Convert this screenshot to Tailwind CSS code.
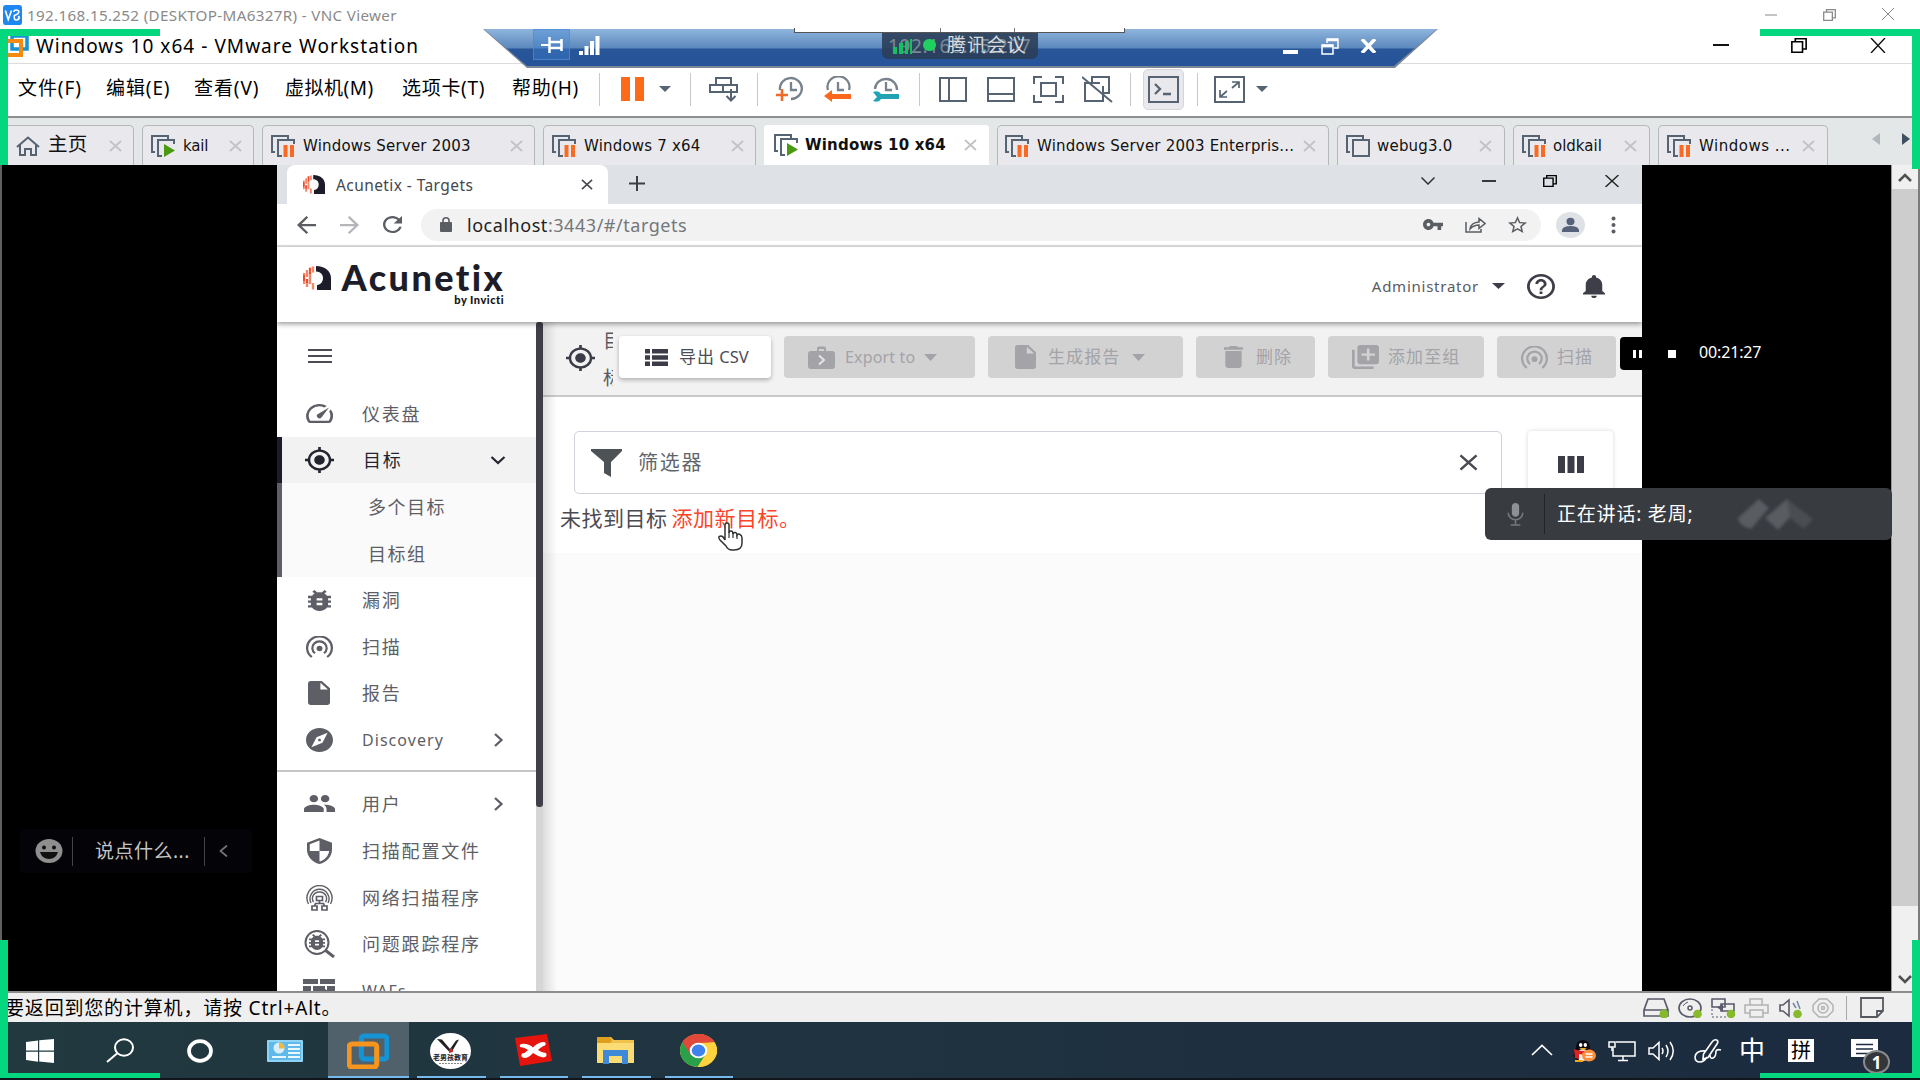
<!DOCTYPE html>
<html lang="zh-CN">
<head>
<meta charset="utf-8">
<title>VNC Viewer</title>
<script src="https://cdn.jsdelivr.net/npm/@tailwindcss/browser@4"></script>
</head>
<body class="bg-white">
<svg class="hidden" xmlns="http://www.w3.org/2000/svg">
  <symbol id="vm" viewBox="0 0 24 22" preserveAspectRatio="none"><path d="M4 17H1V1h16v3" fill="none" stroke="#566372" stroke-width="2"/><path d="M23 9V5H7v16h4" fill="none" stroke="#566372" stroke-width="2"/></symbol>
  <symbol id="vmpause" viewBox="0 0 24 22"><use href="#vm" width="24" height="22"/><path d="M12.500 10h4v12h-4zM19 10h4v12h-4z" fill="#fb6a22"/></symbol>
  <symbol id="vmplay" viewBox="0 0 24 22"><use href="#vm" width="24" height="22"/><path d="M13 9l11 6.500L13 22z" fill="#4a9a10"/></symbol>
  <symbol id="vmoff" viewBox="0 0 24 22"><path d="M4 17H1V1h16v3M7 5h16v16H7z" fill="none" stroke="#566372" stroke-width="2"/></symbol>
  <symbol id="x" viewBox="0 0 13 12" preserveAspectRatio="none"><path d="M1 1l11 10M12 1L1 11" fill="none" stroke="currentColor" stroke-width="1.700"/></symbol>
  <symbol id="target" viewBox="1 1 22 22" preserveAspectRatio="none"><path d="M12 8c-2.210 0-4 1.790-4 4s1.790 4 4 4 4-1.790 4-4-1.790-4-4-4zm8.940 3A8.994 8.994 0 0 0 13 3.060V1h-2v2.060A8.994 8.994 0 0 0 3.060 11H1v2h2.060A8.994 8.994 0 0 0 11 20.940V23h2v-2.060A8.994 8.994 0 0 0 20.940 13H23v-2h-2.060zM12 19c-3.870 0-7-3.130-7-7s3.130-7 7-7 7 3.130 7 7-3.130 7-7 7z" fill="currentColor"/></symbol>
  <symbol id="bug" viewBox="4 3 16 18" preserveAspectRatio="none"><path d="M20 8h-2.810c-.45-.78-1.070-1.450-1.820-1.960L17 4.410 15.590 3l-2.170 2.170C12.960 5.060 12.490 5 12 5c-.49 0-.96.06-1.410.17L8.410 3 7 4.410l1.620 1.630C7.880 6.550 7.260 7.220 6.810 8H4v2h2.090c-.05.33-.09.66-.09 1v1H4v2h2v1c0 .34.04.67.09 1H4v2h2.810c1.040 1.790 2.970 3 5.190 3s4.150-1.210 5.190-3H20v-2h-2.090c.05-.33.09-.66.09-1v-1h2v-2h-2v-1c0-.34-.04-.67-.09-1H20V8zm-6 8h-4v-2h4v2zm0-4h-4v-2h4v2z" fill="currentColor"/></symbol>
  <symbol id="file" viewBox="4 2 16 20" preserveAspectRatio="none"><path d="M6 2c-1.100 0-1.990.9-1.990 2L4 20c0 1.100.89 2 1.990 2H18c1.100 0 2-.9 2-2V8l-6-6H6zm7 7V3.500L18.500 9H13z" fill="currentColor"/></symbol>
  <symbol id="scan" viewBox="0 0 24 21" preserveAspectRatio="none"><g fill="none" stroke="currentColor" stroke-width="2"><path d="M5.200 20A11 11 0 1 1 18.800 20"/><path d="M8 16.500A6.400 6.400 0 1 1 16 16.500"/></g><circle cx="12" cy="12" r="2.600" fill="currentColor"/></symbol>
  <symbol id="caret" viewBox="0 0 12 6" preserveAspectRatio="none"><path d="M0 0h12L6 6z" fill="currentColor"/></symbol>
  <symbol id="chevR" viewBox="0 0 10 14"><path d="M1.500 1l6.500 6-6.500 6" fill="none" stroke="currentColor" stroke-width="2.300"/></symbol>
  <symbol id="acu" viewBox="0 0 28 24" preserveAspectRatio="none"><path d="M13 0C22 0 28 5 28 12v12H14v-5c4-.5 6-3.500 6-7s-2.500-6.500-7-6.500z" fill="#1d1d29"/><path d="M1 7v11M4 4v7M4 13v8M7 6v12M7 1.500v3M10 .5v6M10 17v6.500" stroke="#f4866c" stroke-width="2.400" fill="none"/><path d="M1 9v6M4 13v4M7 2v6" stroke="#e9472b" stroke-width="1.800"/></symbol>
  <symbol id="restore" viewBox="0 0 15 15" preserveAspectRatio="none"><path d="M.8 3.800h10v10.500h-10zM4 3.800V.8h10.200V11h-3.400" fill="none" stroke="currentColor" stroke-width="1.500"/></symbol>
  <symbol id="vmw" viewBox="0 0 41 36" preserveAspectRatio="none"><path d="M16 3h20a3 3 0 0 1 3 3v17a3 3 0 0 1-3 3H17a3 3 0 0 1-3-3V6a3 3 0 0 1 2-3z" fill="none" stroke="#1593d5" stroke-width="5"/><path d="M5 11h21a3 3 0 0 1 3 3v17a3 3 0 0 1-3 3H5a3 3 0 0 1-3-3V14a3 3 0 0 1 3-3z" fill="none" stroke="#f7941d" stroke-width="5"/></symbol>
</svg>

<div class="relative flex h-[1080px] w-[1920px] flex-col overflow-hidden bg-white font-['Noto_Sans','Noto_Sans_CJK_SC',sans-serif] text-black">

  <!-- VNC title bar -->
  <header class="flex h-[29px] shrink-0 items-center bg-white pl-[3px] text-[#8a8a8a]">
    <svg class="h-5 w-[19px]" viewBox="0 0 20 20" preserveAspectRatio="none"><rect width="20" height="20" rx="2.500" fill="#1f87f0"/><path d="M2.500 5.500l3 9 3.500-9M11.500 7q0-2 2.500-2t2.700 1.800Q16.700 9 12 10.500q-.8 4.500 2 4.500 3 0 3-3l-1-1" fill="none" stroke="#fff" stroke-width="1.700"/></svg>
    <span class="ml-[5px] w-[380px] whitespace-nowrap text-[15.200px] leading-5 tracking-[0.330px]">192.168.15.252 (DESKTOP-MA6327R) - VNC Viewer</span>
    <svg class="ml-auto h-[12px] w-[12px]" viewBox="0 0 12 12"><path d="M0 6h12" stroke="#8a8a8a"/></svg>
    <svg class="ml-[46px] h-[12px] w-[13px]"><use href="#restore"/></svg>
    <svg class="mr-[25px] ml-[45px] h-[13px] w-[14px]" viewBox="0 0 14 13"><path d="M1 0l12 12M13 0L1 12" stroke="#8a8a8a" fill="none"/></svg>
  </header>

  <!-- VMware title bar -->
  <header class="flex h-[35px] shrink-0 items-center border-b border-[#dcdcdc]">
    <svg class="h-[22px] w-[29px]" viewBox="0 0 29 22"><path d="M12 1h15v13H12z" fill="none" stroke="#1593d5" stroke-width="3.500"/><path d="M2 6h19v14H2z" fill="none" stroke="#f58a10" stroke-width="4"/></svg>
    <span class="ml-[7px] w-[400px] whitespace-nowrap text-[19px] leading-6 tracking-[1.050px]">Windows 10 x64 - VMware Workstation</span>
    <svg class="mb-[2px] ml-auto h-4 w-4" viewBox="0 0 16 16"><path d="M0 8h16" stroke="#111" stroke-width="2"/></svg>
    <svg class="mb-[2px] ml-[62px] h-[15px] w-4"><use href="#restore"/></svg>
    <svg class="mr-[34px] mb-[2px] ml-[63px] h-[15px] w-4" viewBox="0 0 16 15"><path d="M1 0l14 15M15 0L1 15" stroke="#111" stroke-width="1.400" fill="none"/></svg>
  </header>

  <!-- Menu and toolbar -->
  <nav class="flex h-[54px] shrink-0 items-center border-b-2 border-[#8d8f91] bg-white pb-[2px] pl-[18px] text-[19px] leading-6">
    <span class="mb-[2px] w-[88px] whitespace-nowrap tracking-[0.900px]">文件(F)</span>
    <span class="mb-[2px] w-[88px] whitespace-nowrap tracking-[0.900px]">编辑(E)</span>
    <span class="mb-[2px] w-[91px] whitespace-nowrap tracking-[0.900px]">查看(V)</span>
    <span class="mb-[2px] w-[117px] whitespace-nowrap tracking-[0.500px]">虚拟机(M)</span>
    <span class="mb-[2px] w-[110px] whitespace-nowrap tracking-[0.700px]">选项卡(T)</span>
    <span class="mb-[2px] w-[87px] whitespace-nowrap tracking-[0.700px]">帮助(H)</span>
    <i class="h-[33px] w-px bg-[#c9c9c9]"></i>
    <svg class="ml-[21px] h-6 w-[23px]" viewBox="0 0 23 24"><path d="M0 0h9v24H0zM14 0h9v24h-9z" fill="#fd6a1a"/></svg>
    <svg class="ml-[15px] h-[6px] w-3 text-[#566372]"><use href="#caret"/></svg>
    <i class="ml-[19px] h-[33px] w-px bg-[#c9c9c9]"></i>
    <svg class="ml-[18px] h-[26px] w-[30px]" viewBox="0 0 30 26" fill="none" stroke="#566372" stroke-width="2"><path d="M7 2h15v7H7zM1 9h13v7H1zM14 9h14v7H14zM22 13v11M17.500 20l4.500 4.500 4.500-4.500"/></svg>
    <i class="ml-[18px] h-[33px] w-px bg-[#c9c9c9]"></i>
    <svg class="ml-[18px] h-[26px] w-[28px]" viewBox="0 0 28 26" fill="none"><path d="M4 14A11 10.500 0 1 1 15 23" stroke="#77828d" stroke-width="2.300"/><path d="M15 6v8h6" stroke="#77828d" stroke-width="2.300"/><path d="M0 19h12M6 13v12" stroke="#f06a2a" stroke-width="2.600"/></svg>
    <svg class="ml-[20px] h-[26px] w-[28px]" viewBox="0 0 28 26" fill="none"><path d="M4 14A11 10.500 0 1 1 25 14" stroke="#77828d" stroke-width="2.300"/><path d="M14 6v8h6" stroke="#77828d" stroke-width="2.300"/><path d="M0 20l8-6v4h19v5H8v3z" fill="#fb671c"/></svg>
    <svg class="ml-[20px] h-[26px] w-[28px]" viewBox="0 0 28 26" fill="none"><path d="M3 13A11 10.500 0 1 1 25 14" stroke="#77828d" stroke-width="2.300"/><path d="M14 6v8h6" stroke="#77828d" stroke-width="2.300"/><path d="M1 16q6-2 8 2h18v5H9q-2 4-8 2l4-4z" fill="#1fa3b5"/></svg>
    <i class="ml-[19px] h-[33px] w-px bg-[#c9c9c9]"></i>
    <svg class="ml-[19px] h-[25px] w-[28px]" viewBox="0 0 28 25" fill="none" stroke="#566372" stroke-width="2"><path d="M1 1h26v23H1zM10 1v23"/></svg>
    <svg class="ml-[20px] h-[25px] w-[28px]" viewBox="0 0 28 25" fill="none" stroke="#566372" stroke-width="2"><path d="M1 1h26v23H1zM1 17h26"/></svg>
    <svg class="ml-[18px] h-[27px] w-[31px]" viewBox="0 0 31 27" fill="none" stroke="#566372" stroke-width="2"><path d="M1 8V1h8M22 1h8v7M30 19v7h-8M9 26H1v-7M8 7h15v13H8z"/></svg>
    <svg class="ml-[18px] h-[27px] w-[31px]" viewBox="0 0 31 27" fill="none" stroke="#566372" stroke-width="2"><path d="M10 7V1h17v16h-6M18 7H3v18h18V10M0 1l30 25"/></svg>
    <i class="ml-[17px] h-[33px] w-px bg-[#c9c9c9]"></i>
    <span class="ml-[12px] flex h-[41px] w-[41px] items-center justify-center rounded-[5px] border border-[#d6d6d9] bg-[#e9e9ed]"><svg class="h-[27px] w-[31px]" viewBox="0 0 31 27" fill="none" stroke="#566372" stroke-width="2"><path d="M1 1h29v25H1z"/><path d="M7 8l5 5-5 5M15 18h8" stroke-width="2.300"/></svg></span>
    <i class="ml-[13px] h-[33px] w-px bg-[#c9c9c9]"></i>
    <svg class="ml-[16px] h-[27px] w-[31px]" viewBox="0 0 31 27" fill="none" stroke="#566372" stroke-width="2"><path d="M1 1h29v25H1z"/><path d="M18 6h7v6M25 6l-7 6M6 14v7h7M6 21l7-6" stroke-width="1.700"/></svg>
    <svg class="ml-[11px] h-[6px] w-3 text-[#566372]"><use href="#caret"/></svg>
  </nav>

  <!-- Virtual machine tabs -->
  <div class="flex h-[47px] shrink-0 gap-2 bg-[#e3e7e8] pt-[7px] font-['DejaVu_Sans','Noto_Sans_CJK_SC',sans-serif] text-[15px] leading-5 tracking-[0.200px] text-[#111]">
    <div class="flex w-[134px] items-center rounded-t-[5px] border border-b-0 border-[#b5b7b9] bg-[#e9e9ed] pr-[11px] pl-[15px]"><svg class="h-[20px] w-6" viewBox="0 0 24 20" fill="none" stroke="#566372" stroke-width="2"><path d="M1 11L12 1.500 23 11M4 9v10h5v-6h6v6h5V9"/></svg><span class="mb-[2px] ml-[8px] flex-1 text-[19.500px] whitespace-nowrap">主页</span><svg class="h-3 w-[13px] text-[#c2c2c5]"><use href="#x"/></svg></div>
    <div class="flex w-[112px] items-center rounded-t-[5px] border border-b-0 border-[#b5b7b9] bg-[#e9e9ed] pr-[11px] pl-[8px]"><svg class="h-[22px] w-6"><use href="#vmplay"/></svg><span class="ml-2 flex-1 whitespace-nowrap tracking-[-0.200px]">kail</span><svg class="h-3 w-[13px] text-[#c2c2c5]"><use href="#x"/></svg></div>
    <div class="flex w-[273px] items-center rounded-t-[5px] border border-b-0 border-[#b5b7b9] bg-[#e9e9ed] pr-[11px] pl-[8px]"><svg class="h-[22px] w-6"><use href="#vmpause"/></svg><span class="ml-2 flex-1 whitespace-nowrap">Windows Server 2003</span><svg class="h-3 w-[13px] text-[#c2c2c5]"><use href="#x"/></svg></div>
    <div class="flex w-[213px] items-center rounded-t-[5px] border border-b-0 border-[#b5b7b9] bg-[#e9e9ed] pr-[11px] pl-[8px]"><svg class="h-[22px] w-6"><use href="#vmpause"/></svg><span class="ml-2 flex-1 whitespace-nowrap">Windows 7 x64</span><svg class="h-3 w-[13px] text-[#c2c2c5]"><use href="#x"/></svg></div>
    <div class="flex w-[225px] items-center rounded-t-[3px] bg-white pr-[12px] pl-[10px]"><svg class="h-[22px] w-6"><use href="#vmplay"/></svg><span class="ml-[7px] flex-1 font-bold whitespace-nowrap">Windows 10 x64</span><svg class="h-3 w-[13px] text-[#c2c2c5]"><use href="#x"/></svg></div>
    <div class="flex w-[332px] items-center rounded-t-[5px] border border-b-0 border-[#b5b7b9] bg-[#e9e9ed] pr-[12px] pl-[7px]"><svg class="h-[22px] w-6"><use href="#vmpause"/></svg><span class="ml-2 flex-1 whitespace-nowrap">Windows Server 2003 Enterpris...</span><svg class="h-3 w-[13px] text-[#c2c2c5]"><use href="#x"/></svg></div>
    <div class="flex w-[168px] items-center rounded-t-[5px] border border-b-0 border-[#b5b7b9] bg-[#e9e9ed] pr-[12px] pl-[8px]"><svg class="h-[22px] w-6"><use href="#vmoff"/></svg><span class="ml-[7px] flex-1 whitespace-nowrap">webug3.0</span><svg class="h-3 w-[13px] text-[#c2c2c5]"><use href="#x"/></svg></div>
    <div class="flex w-[137px] items-center rounded-t-[5px] border border-b-0 border-[#b5b7b9] bg-[#e9e9ed] pr-[12px] pl-[8px]"><svg class="h-[22px] w-6"><use href="#vmpause"/></svg><span class="ml-[7px] flex-1 whitespace-nowrap tracking-normal">oldkail</span><svg class="h-3 w-[13px] text-[#c2c2c5]"><use href="#x"/></svg></div>
    <div class="flex w-[170px] items-center rounded-t-[5px] border border-b-0 border-[#b5b7b9] bg-[#e9e9ed] pr-[12px] pl-[8px]"><svg class="h-[22px] w-6"><use href="#vmpause"/></svg><span class="ml-2 flex-1 whitespace-nowrap tracking-[0.500px]">Windows ...</span><svg class="h-3 w-[13px] text-[#c2c2c5]"><use href="#x"/></svg></div>
    <svg class="mt-[8px] ml-[36px] h-[12px] w-[8px]" viewBox="0 0 8 12"><path d="M8 0v12L0 6z" fill="#b0b6bd"/></svg>
    <svg class="mt-[8px] ml-[14px] h-[12px] w-[8px]" viewBox="0 0 8 12"><path d="M0 0v12l8-6z" fill="#3f5060"/></svg>
  </div>

  <!-- Guest screen -->
  <main class="flex h-[826px] shrink-0 border-l-2 border-[#5f6163] bg-black">
    <section class="ml-[275px] flex h-full w-[1365px] flex-col overflow-hidden bg-white">
      <!-- Chrome tab strip -->
      <div class="flex h-[39px] shrink-0 items-center bg-[#dee1e6] pl-[10px]">
        <div class="flex h-full w-[321px] items-center rounded-t-[8px] bg-white pl-[16px]">
          <svg class="h-[19px] w-[22px]"><use href="#acu"/></svg>
          <span class="ml-[11px] w-[245px] text-[15.500px] leading-5 tracking-[0.420px] whitespace-nowrap text-[#45484d]">Acunetix - Targets</span>
          <svg class="h-[11px] w-[12px] text-[#45484d]"><use href="#x"/></svg>
        </div>
        <svg class="mb-[2px] ml-[21px] h-[15px] w-4" viewBox="0 0 16 15"><path d="M0 7.500h16M8 0v15" stroke="#3c4043" stroke-width="2"/></svg>
        <svg class="mb-[7px] ml-auto h-[8px] w-[14px]" viewBox="0 0 14 8"><path d="M.5.500L7 7 13.500.500" fill="none" stroke="#333" stroke-width="1.500"/></svg>
        <svg class="mb-[7px] ml-[47px] h-[10px] w-[14px]" viewBox="0 0 14 10"><path d="M0 5h14" stroke="#000" stroke-width="1.500"/></svg>
        <svg class="mb-[7px] ml-[47px] h-[12px] w-[14px]"><use href="#restore"/></svg>
        <svg class="mr-[23px] mb-[7px] ml-[48px] h-[12px] w-[14px]" viewBox="0 0 14 12"><path d="M.5 0l13 12M13.500 0l-13 12" fill="none" stroke="#222" stroke-width="1.400"/></svg>
      </div>
      <!-- Address bar -->
      <div class="flex h-[43px] shrink-0 items-center border-b-2 border-[#e0e0e1] bg-white pl-[20px] text-[#5a5d62]">
        <svg class="h-[18px] w-[19px]" viewBox="4 4 16 16" preserveAspectRatio="none"><path d="M20 11H7.830l5.590-5.590L12 4l-8 8 8 8 1.410-1.410L7.830 13H20v-2z" fill="currentColor"/></svg>
        <svg class="ml-6 h-[18px] w-[19px] -scale-x-100 text-[#b4b6b9]" viewBox="4 4 16 16" preserveAspectRatio="none"><path d="M20 11H7.830l5.590-5.590L12 4l-8 8 8 8 1.410-1.410L7.830 13H20v-2z" fill="currentColor"/></svg>
        <svg class="ml-6 h-[17px] w-[19px]" viewBox="4 4 16 16" preserveAspectRatio="none"><path d="M17.650 6.350C16.200 4.900 14.210 4 12 4c-4.420 0-7.990 3.580-7.990 8s3.570 8 7.990 8c3.730 0 6.840-2.550 7.730-6h-2.080c-.82 2.330-3.040 4-5.650 4-3.310 0-6-2.690-6-6s2.690-6 6-6c1.660 0 3.140.69 4.220 1.780L13 11h7V4l-2.350 2.350z" fill="currentColor"/></svg>
        <div class="ml-[19px] flex h-8 w-[1120px] items-center rounded-full bg-[#f2f2f2] pl-[19px]">
          <svg class="h-[15px] w-3" viewBox="0 0 12 15"><path d="M1 5h10a1 1 0 0 1 1 1v8a1 1 0 0 1-1 1H1a1 1 0 0 1-1-1V6a1 1 0 0 1 1-1z" fill="currentColor"/><path d="M3 6V3.500a3 2.700 0 0 1 6 0V6" fill="none" stroke="currentColor" stroke-width="1.600"/></svg>
          <span class="ml-[15px] text-[18px] leading-6 tracking-[0.540px] whitespace-nowrap text-[#74777b]"><span class="text-[#222]">localhost</span>:3443/#/targets</span>
          <svg class="ml-auto h-[11px] w-[20px]" viewBox="1 6 22 12" preserveAspectRatio="none"><path d="M12.650 10C11.830 7.670 9.610 6 7 6c-3.310 0-6 2.690-6 6s2.690 6 6 6c2.610 0 4.830-1.670 5.650-4H17v4h4v-4h2v-4H12.650zM7 14c-1.100 0-2-.9-2-2s.9-2 2-2 2 .9 2 2-.9 2-2 2z" fill="currentColor"/></svg>
          <svg class="ml-[22px] h-[16px] w-[21px]" viewBox="0 0 21 16" fill="none" stroke="currentColor" stroke-width="1.500"><path d="M1 5v10h15v-3"/><path d="M5 12q1-6.500 9-7V1.500l6 5-6 5V8q-5 0-9 4z"/></svg>
          <svg class="mr-[14px] ml-[22px] h-[17px] w-[19px]" viewBox="2 2 20 19" preserveAspectRatio="none"><path d="M22 9.240l-7.190-.62L12 2 9.190 8.630 2 9.240l5.460 4.730L5.820 21 12 17.270 18.180 21l-1.630-7.030L22 9.240zM12 15.400l-3.760 2.270 1-4.280-3.320-2.880 4.380-.38L12 6.100l1.710 4.040 4.380.38-3.320 2.880 1 4.280L12 15.400z" fill="currentColor"/></svg>
        </div>
        <svg class="ml-[15px] h-[26px] w-[29px]" viewBox="0 0 29 26"><ellipse cx="14.500" cy="13" rx="14.500" ry="13" fill="#dee1e6"/><ellipse cx="14.500" cy="9.500" rx="4" ry="3.700" fill="#56617a"/><path d="M6 20v-2q1-4 8.500-4t8.500 4v2z" fill="#56617a"/></svg>
        <svg class="ml-[26px] h-[18px] w-[5px]" viewBox="0 0 5 18" fill="currentColor"><circle cx="2.500" cy="2.500" r="2"/><circle cx="2.500" cy="9" r="2"/><circle cx="2.500" cy="15.500" r="2"/></svg>
      </div>
      <!-- Acunetix header -->
      <div class="z-10 flex h-[75px] shrink-0 items-start bg-white pt-[14px] pl-[26px] shadow-[0_2px_5px_rgba(0,0,0,0.400)]">
        <svg class="mt-[5px] h-[24px] w-[28px]"><use href="#acu"/></svg>
        <div class="ml-[10px] flex w-[164px] flex-col items-end font-['Lato',sans-serif]">
          <span class="text-[36px] leading-[32px] font-black tracking-[2.400px] whitespace-nowrap text-[#1d1d29]">Acunetix</span>
          <span class="mt-[1px] mr-[1px] text-[11px] leading-[12px] font-black tracking-[0.500px] whitespace-nowrap text-[#111]">by Invicti</span>
        </div>
        <div class="mt-[12px] mr-[37px] ml-auto flex h-[26px] items-center text-[#3e3e48]">
          <span class="text-[15px] leading-5 tracking-[0.750px] whitespace-nowrap text-[#5a5a62]">Administrator</span>
          <svg class="ml-[13px] h-[6px] w-[13px]"><use href="#caret"/></svg>
          <svg class="ml-[22px] h-[25px] w-[28px]" viewBox="2 2 20 20" preserveAspectRatio="none"><path d="M11 18h2v-2h-2v2zm1-16C6.480 2 2 6.480 2 12s4.480 10 10 10 10-4.480 10-10S17.520 2 12 2zm0 18c-4.410 0-8-3.590-8-8s3.590-8 8-8 8 3.590 8 8-3.590 8-8 8zm0-14c-2.210 0-4 1.790-4 4h2c0-1.100.9-2 2-2s2 .9 2 2c0 2-3 1.750-3 5h2c0-2.250 3-2.500 3-5 0-2.210-1.790-4-4-4z" fill="currentColor"/></svg>
          <svg class="ml-[28px] h-[23px] w-[22px]" viewBox="4 2.500 16 19.500" preserveAspectRatio="none"><path d="M12 22c1.100 0 2-.9 2-2h-4c0 1.100.89 2 2 2zm6-6v-5c0-3.070-1.640-5.640-4.500-6.320V4c0-.83-.67-1.500-1.500-1.500s-1.500.67-1.500 1.500v.68C7.630 5.360 6 7.920 6 11v5l-2 2v1h16v-1l-2-2z" fill="currentColor"/></svg>
        </div>
      </div>
      <div class="flex h-[669px] shrink-0">
        <!-- Sidebar -->
        <aside class="flex h-full w-[259px] shrink-0 flex-col overflow-hidden bg-white text-[18px] leading-6 tracking-[1.800px] text-[#5e5e66]">
          <div class="flex h-[68px] shrink-0 pt-[27px] pl-[31px]"><svg class="h-[14px] w-6" viewBox="0 0 24 14"><path d="M0 1h24M0 7h24M0 13h24" stroke="#4c4c54" stroke-width="2"/></svg></div>
          <div class="flex h-[47px] shrink-0 items-center pl-[29px]"><svg class="h-[19px] w-[27px]" viewBox="2 4 20 16" preserveAspectRatio="none"><path d="M20.380 8.570l-1.230 1.850a8 8 0 0 1-.22 7.580H5.070A8 8 0 0 1 15.580 6.850l1.850-1.230A10 10 0 0 0 3.350 19a2 2 0 0 0 1.720 1h13.850a2 2 0 0 0 1.740-1 10 10 0 0 0-.27-10.440zm-9.790 6.840a2 2 0 0 0 2.830 0l5.660-8.490-8.490 5.660a2 2 0 0 0 0 2.830z" fill="currentColor"/></svg><span class="ml-[29px]">仪表盘</span></div>
          <div class="flex h-[46px] shrink-0 items-center border-l-[5px] border-[#1d1b29] bg-[#f2f2f2] pl-[23px] text-[#24242e]"><svg class="h-[26px] w-[29px]"><use href="#target"/></svg><span class="ml-[29px] w-[127px]">目标</span><svg class="h-[9px] w-[16px]" viewBox="0 0 16 9"><path d="M1.500 1L8 7l6.500-6" fill="none" stroke="currentColor" stroke-width="2.200"/></svg></div>
          <div class="flex h-[94px] shrink-0 flex-col border-l-[5px] border-[#5f5d68] bg-[#fafafa] pl-[86px] tracking-[1.500px]"><span class="flex h-[47px] items-center">多个目标</span><span class="flex h-[47px] items-center">目标组</span></div>
          <div class="flex h-[46px] shrink-0 items-center pl-[31px]"><svg class="h-[21px] w-[23px]"><use href="#bug"/></svg><span class="ml-[31px]">漏洞</span></div>
          <div class="flex h-[47px] shrink-0 items-center pl-[29px]"><svg class="h-[22px] w-[27px]"><use href="#scan"/></svg><span class="ml-[29px]">扫描</span></div>
          <div class="flex h-[46px] shrink-0 items-center pl-[31px]"><svg class="h-[24px] w-[22px]"><use href="#file"/></svg><span class="ml-[32px]">报告</span></div>
          <div class="flex h-[47px] shrink-0 items-center pl-[29px]"><svg class="h-[24px] w-[27px]" viewBox="2 2 20 20" preserveAspectRatio="none"><path d="M12 10.900c-.61 0-1.100.49-1.100 1.100s.49 1.100 1.100 1.100c.61 0 1.100-.49 1.100-1.100s-.49-1.100-1.100-1.100zM12 2C6.480 2 2 6.480 2 12s4.480 10 10 10 10-4.480 10-10S17.520 2 12 2zm2.190 12.190L6 18l3.810-8.190L18 6l-3.810 8.190z" fill="currentColor"/></svg><span class="ml-[29px] w-[131px] text-[16px] tracking-[1.050px]">Discovery</span><svg class="h-[14px] w-[11px]"><use href="#chevR"/></svg></div>
          <div class="mb-[8px] h-[9px] shrink-0 border-b-2 border-[#c6c6c9]"></div>
          <div class="flex h-[47px] shrink-0 items-center pl-[27px]"><svg class="h-[17px] w-[31px]" viewBox="1 5 22 14" preserveAspectRatio="none"><path d="M16 11c1.660 0 2.990-1.340 2.990-3S17.660 5 16 5c-1.660 0-3 1.340-3 3s1.340 3 3 3zm-8 0c1.660 0 2.990-1.340 2.990-3S9.660 5 8 5C6.340 5 5 6.340 5 8s1.340 3 3 3zm0 2c-2.330 0-7 1.170-7 3.500V19h14v-2.500c0-2.330-4.670-3.500-7-3.500zm8 0c-.29 0-.62.02-.97.05 1.160.84 1.970 1.970 1.970 3.450V19h6v-2.500c0-2.330-4.670-3.500-7-3.500z" fill="currentColor"/></svg><span class="ml-[27px] w-[131px]">用户</span><svg class="h-[14px] w-[11px]"><use href="#chevR"/></svg></div>
          <div class="flex h-[47px] shrink-0 items-center pl-[30px]"><svg class="h-[26px] w-[25px]" viewBox="3 1 18 22" preserveAspectRatio="none"><path d="M12 1L3 5v6c0 5.550 3.840 10.740 9 12 5.160-1.260 9-6.450 9-12V5l-9-4zm0 10.990h7c-.53 4.120-3.280 7.790-7 8.940V12H5V6.300l7-3.110v8.800z" fill="currentColor"/></svg><span class="ml-[30px]">扫描配置文件</span></div>
          <div class="flex h-[47px] shrink-0 items-center pl-[28px]"><svg class="h-[26px] w-[29px]" viewBox="0 0 29 26" fill="none" stroke="currentColor" stroke-width="1.400"><path d="M3.500 19A12.500 12.500 0 1 1 25.500 19M6 18A9.500 9.500 0 1 1 23 18M8.500 17A6.500 6.500 0 0 1 14.500 7a6.500 6.500 0 0 1 6 10"/><path d="M11.500 11.500h6v4h-6zM7 21h5v4H7zM17 21h5v4h-5zM14.500 15.500v3M9.500 21l1-2.500h8l1 2.500" stroke-width="1.700"/></svg><span class="ml-[28px]">网络扫描程序</span></div>
          <div class="flex h-[46px] shrink-0 items-center pl-[26px]"><svg class="h-[28px] w-[33px]" viewBox="0 0 33 28"><circle cx="14" cy="12.500" r="11.500" fill="none" stroke="currentColor" stroke-width="2"/><path d="M22 20l9 7" stroke="currentColor" stroke-width="3"/><use href="#bug" x="6" y="4" width="16" height="16"/></svg><span class="ml-[26px]">问题跟踪程序</span></div>
          <div class="flex h-[47px] shrink-0 items-center pl-[26px]"><svg class="h-[28px] w-[32px]" viewBox="0 0 32 28" fill="currentColor"><path d="M0 2h15v5H0zM17 2h15v5H17zM0 9h8v5H0zM10 9h12v5H10zM24 9h8v5h-8zM0 16h15v5H0zM17 15l5-3 6 4-2 6h-8z"/></svg><span class="ml-[27px] text-[16px] tracking-[1.050px]">WAFs</span></div>
        </aside>
        <div class="h-full w-[7px] shrink-0 bg-[#d6d6d6]"><div class="h-[485px] rounded-[3px] bg-[#413f4a]"></div></div>
        <!-- Targets page -->
        <div class="relative flex h-full w-[1099px] flex-col bg-[#fbfbfb]">
          <div class="flex h-[75px] shrink-0 items-center border-b-2 border-[#c9c9c9] bg-[#f2f2f2] pb-[3px] pl-[23px] text-[17px] leading-6 tracking-[1.100px] whitespace-nowrap shadow-[0_1px_4px_rgba(0,0,0,0.180)]">
            <svg class="mt-[2px] h-[26px] w-[29px] text-[#3c3c48]"><use href="#target"/></svg>
            <div class="ml-[8px] h-[68px] w-[10px] overflow-hidden text-[19px] leading-[37px] tracking-normal text-[#5a5a62]"><div class="h-[37px]">目</div><div class="h-[37px]">标</div></div>
            <button class="ml-[6px] flex h-[42px] w-[152px] items-center rounded-[4px] bg-white pl-[26px] text-[#4c4c56] shadow-[0_2px_4px_rgba(0,0,0,0.280)]"><svg class="h-[17px] w-[23px]" viewBox="0 0 23 17"><path d="M0 0h5v4.500H0zM7 0h16v4.500H7zM0 6.200h5v4.500H0zM7 6.200h16v4.500H7zM0 12.500h5V17H0zM7 12.500h16V17H7z" fill="#3c3c48"/></svg><span class="ml-[11px]">导出<span class="ml-1 text-[16.500px] tracking-normal">CSV</span></span></button>
            <button class="ml-[13px] flex h-[42px] w-[191px] items-center rounded-[4px] bg-[#d2d2d2] pl-[24px] text-[#a3a3a8]"><svg class="h-[23px] w-[27px]" viewBox="0 0 27 23"><path d="M3 5h6V2.500A2 2 0 0 1 11 .5h5a2 2 0 0 1 2 2V5h6a3 3 0 0 1 3 3v12a3 3 0 0 1-3 3H3a3 3 0 0 1-3-3V8a3 3 0 0 1 3-3zm8 0h5V3h-5z" fill="currentColor" fill-rule="evenodd"/><path d="M11 9.500l5 4.500-5 4.500" fill="none" stroke="#e4e4e4" stroke-width="2"/></svg><span class="ml-[10px] w-[79px] text-left text-[16px] tracking-[0.150px]">Export to</span><svg class="h-[7px] w-[13px]"><use href="#caret"/></svg></button>
            <button class="ml-[13px] flex h-[42px] w-[195px] items-center rounded-[4px] bg-[#d2d2d2] pl-[27px] text-[#a3a3a8]"><svg class="h-[24px] w-[21px]"><use href="#file"/></svg><span class="ml-[12px] w-[84px] text-left">生成报告</span><svg class="h-[7px] w-[13px]"><use href="#caret"/></svg></button>
            <button class="ml-[13px] flex h-[42px] w-[119px] items-center rounded-[4px] bg-[#d2d2d2] pl-[28px] text-[#a3a3a8]"><svg class="h-[22px] w-[19px]" viewBox="5 3 14 18" preserveAspectRatio="none"><path d="M6 19c0 1.100.9 2 2 2h8c1.100 0 2-.9 2-2V7H6v12zM19 4h-3.500l-1-1h-5l-1 1H5v2h14V4z" fill="currentColor"/></svg><span class="ml-[13px]">删除</span></button>
            <button class="ml-[13px] flex h-[42px] w-[156px] items-center rounded-[4px] bg-[#d2d2d2] pl-[24px] text-[#a3a3a8]"><svg class="h-[24px] w-[27px]" viewBox="2 2 20 20" preserveAspectRatio="none"><path d="M4 6H2v14c0 1.100.9 2 2 2h14v-2H4V6zm16-4H8c-1.100 0-2 .9-2 2v12c0 1.100.9 2 2 2h12c1.100 0 2-.9 2-2V4c0-1.100-.9-2-2-2zm-1 9h-4v4h-2v-4H9V9h4V5h2v4h4v2z" fill="currentColor"/></svg><span class="ml-[9px]">添加至组</span></button>
            <button class="ml-[13px] flex h-[42px] w-[119px] items-center rounded-[4px] bg-[#d2d2d2] pl-[24px] text-[#a3a3a8]"><svg class="h-[23px] w-[27px]"><use href="#scan"/></svg><span class="ml-[9px]">扫描</span></button>
          </div>
          <div class="flex h-[156px] shrink-0 flex-col bg-white pt-[34px] pl-[31px]">
            <div class="flex">
              <div class="flex h-[63px] w-[928px] items-center rounded-[5px] border-[1.500px] border-[#d2d2dd] pl-[16px] text-[20px] leading-6 tracking-[1.700px] text-[#5f666b]"><svg class="h-[28px] w-[31px]" viewBox="0 0 31 28"><path d="M0 0h31v2L20 13v15l-7-4V13L0 2z" fill="#4c5256"/></svg><span class="ml-[16px]">筛选器</span><svg class="mr-[23px] ml-auto h-[17px] w-[19px] text-[#484850]"><use href="#x"/></svg></div>
              <div class="ml-[26px] flex h-[64px] w-[85px] items-center justify-center rounded-[4px] bg-white pt-[3px] shadow-[0_0_4px_rgba(0,0,0,0.160)]"><svg class="h-[17px] w-[26px]" viewBox="0 0 26 17"><path d="M0 0h7v17H0zM9.500 0h7v17h-7zM19 0h7v17h-7z" fill="#3c3c48"/></svg></div>
            </div>
            <p class="mt-[10px] ml-[-14px] text-[21px] leading-[26px] tracking-[0.500px] whitespace-nowrap text-[#4a4a52]">未找到目标<span class="ml-[4px] text-[#f9452a]">添加新目标。</span></p>
          </div>
          <div class="pointer-events-none absolute top-0 left-0 h-full w-[14px] bg-linear-to-r from-black/12 to-transparent"></div>
        </div>
      </div>
    </section>
    <!-- Vertical scrollbar -->
    <div class="ml-[249px] flex h-full w-[27px] flex-col border-l border-[#9a9a9a] bg-[#f0f0f0]">
      <div class="flex h-6 items-center justify-center"><svg class="h-[9px] w-[14px]" viewBox="0 0 14 9"><path d="M1 8l6-6 6 6" fill="none" stroke="#505050" stroke-width="2.500"/></svg></div>
      <div class="h-[717px] bg-[#cdcdcd]"></div>
      <svg class="mt-[69px] ml-[6px] h-[9px] w-[14px]" viewBox="0 0 14 9"><path d="M1 1l6 6 6-6" fill="none" stroke="#505050" stroke-width="2.500"/></svg>
    </div>
    <div class="h-full w-[2px] bg-[#7b7b7b]"></div>
  </main>

  <!-- VMware status bar -->
  <footer class="flex h-[31px] shrink-0 items-center border-t-2 border-[#8c8c8c] bg-[#efefef] pl-[5px]">
    <span class="text-[19px] leading-6 tracking-[0.820px] whitespace-nowrap">要返回到您的计算机，请按 Ctrl+Alt。</span>
    <div class="mr-[36px] ml-auto flex items-center text-[#5a5a6a]">
      <svg class="h-5 w-[27px]" viewBox="0 0 27 20" fill="none"><path d="M5 1h16l4 11v6H1v-6zM1 12h24" stroke="currentColor" stroke-width="1.700"/><circle cx="21" cy="16" r="4.500" fill="#86b92c"/></svg>
      <svg class="ml-[8px] h-5 w-[24px]" viewBox="0 0 24 20" fill="none"><ellipse cx="12" cy="10" rx="11" ry="9" stroke="currentColor" stroke-width="1.700"/><circle cx="12" cy="10" r="2" stroke="currentColor" stroke-width="1.500"/><path d="M5 8q2-3 5-4" stroke="currentColor"/><circle cx="19.500" cy="16" r="4.300" fill="#86b92c"/></svg>
      <svg class="ml-[9px] h-5 w-[25px]" viewBox="0 0 25 20" fill="none"><path d="M1 1h13v8H1zM10 6h13v7H10z" stroke="currentColor" stroke-width="1.600" fill="#efefef"/><path d="M1 11v8h14" stroke="currentColor" stroke-dasharray="2 2"/><path d="M12 6l-6 3.500 6 4z" fill="currentColor"/><circle cx="20" cy="16" r="4.300" fill="#86b92c"/></svg>
      <svg class="ml-[8px] h-5 w-[25px] text-[#b3b3b3]" viewBox="0 0 25 20" fill="none" stroke="currentColor" stroke-width="1.600"><path d="M6 7V1h12v6M6 15H1V7h23v8h-5M6 12h13v7H6z"/></svg>
      <svg class="ml-[10px] h-5 w-[23px]" viewBox="0 0 23 20" fill="none"><path d="M1 7h3l6-5v16l-6-5H1z" stroke="currentColor" stroke-width="1.600"/><path d="M14 5l3 5M18 3l3 8" stroke="#7888a8" stroke-width="1.600"/><circle cx="18.500" cy="16" r="4.300" fill="#86b92c"/></svg>
      <svg class="ml-[10px] h-5 w-[22px] text-[#b3b3b3]" viewBox="0 0 22 20" fill="none" stroke="currentColor" stroke-width="1.500"><path d="M7 1h8l6 6v6l-6 6H7l-6-6V7z"/><circle cx="11" cy="10" r="5"/><circle cx="11" cy="10" r="1.500"/></svg>
      <i class="ml-[12px] h-6 w-px bg-[#a8a8a8]"></i>
      <svg class="ml-[13px] h-[21px] w-[24px]" viewBox="0 0 24 21" fill="none" stroke="#55585d" stroke-width="1.800"><path d="M1 1h22v13l-6 6H1zM23 14h-6v6"/></svg>
    </div>
  </footer>

  <!-- Windows taskbar -->
  <footer class="flex h-[56px] shrink-0 bg-linear-to-r from-[#21393f] to-[#1c2b40]">
    <svg class="mt-[17px] ml-[26px] h-[24px] w-[28px]" viewBox="0 0 28 24" fill="#fff"><path d="M0 3l12-1.600V11.500H0zM13.200 1.200L28 0v11.500H13.200zM0 12.700h12v10L0 21zM13.200 12.700H28V24l-14.800-1.500z"/></svg>
    <svg class="mt-[16px] ml-[52px] h-[25px] w-[28px]" viewBox="0 0 28 25" fill="none" stroke="#fff" stroke-width="2"><ellipse cx="18" cy="9.500" rx="9" ry="8.300"/><path d="M11 15.500L1 24"/></svg>
    <svg class="mt-[17px] ml-[53px] h-[24px] w-[26px]" viewBox="0 0 26 24"><ellipse cx="13" cy="12" rx="11" ry="9.800" fill="none" stroke="#fff" stroke-width="3.700"/></svg>
    <svg class="mt-[18px] ml-[54px] h-[22px] w-[36px]" viewBox="0 0 36 22"><rect width="36" height="22" rx="1.500" fill="#5fb9ea"/><rect x="1" y="1" width="34" height="20" fill="none" stroke="#9fdcf8" stroke-width="1.500"/><circle cx="12" cy="8" r="5.500" fill="#d8eefa"/><path d="M12 2.500v6h5.500A5.500 5.500 0 0 0 12 2.500z" fill="#f2b83a"/><path d="M21 5h12M21 9h12M21 13h12M5 17h14M21 17h12" stroke="#e9f8ff" stroke-width="1.800"/></svg>
    <div class="ml-[25px] flex h-full w-[81px] items-start border-b-2 border-[#76b9ed] bg-[#50616c] pt-[11px] pl-[19px]"><svg class="h-[36px] w-[42px]"><use href="#vmw"/></svg></div>
    <div class="ml-[8px] flex h-full w-[69px] items-start border-b-2 border-[#76b9ed] pt-[11px] pl-[13px]"><svg class="h-[36px] w-[41px]" viewBox="0 0 41 36"><ellipse cx="20.500" cy="18" rx="20.500" ry="18" fill="#fff"/><path d="M7 6l5 .5 8 9.500 6-8.500 3-1-7 12h-3z" fill="#222"/><path d="M19 17l3-2 1 4-4 1z" fill="#c22"/><text x="20.500" y="27" font-size="7" font-weight="bold" text-anchor="middle" fill="#222">老男孩教育</text><path d="M9 30.500h23" stroke="#888" stroke-dasharray="2 1"/></svg></div>
    <div class="ml-[14px] flex h-full w-[68px] items-start border-b-2 border-[#76b9ed] pt-[12px] pl-[15px]"><svg class="h-[32px] w-[37px]" viewBox="0 0 37 32"><path d="M0 4L32 0l5 27-32 5z" fill="#e5140c"/><path d="M6 10q7-1 12 3.500Q23 8 29 8q3 1 1 3.500-3 .5-7 4.500 4 3 8 3 2 4-3 4.500-5-1-10-4.500-4 5-9 5-4-1-2-4.500 3 0 6-3.500-4-3-8-3-1-2 1-3z" fill="#fff"/></svg></div>
    <div class="ml-[14px] flex h-full w-[69px] items-start border-b-2 border-[#76b9ed] pt-[15px] pl-[15px]"><svg class="h-[27px] w-[37px]" viewBox="0 0 37 27"><path d="M0 0h14l3 3h20v23H0z" fill="#f0c14b"/><path d="M0 0h13l2 4-2 2H0z" fill="#dfa01e"/><path d="M0 6h37v20H0z" fill="#fbdc74"/><path d="M6 13h25v14h-6v-8H12v8H6z" fill="#3f8ad8"/></svg></div>
    <div class="ml-[14px] flex h-full w-[68px] items-start border-b-2 border-[#76b9ed] pt-[12px] pl-[15px]"><svg class="h-[33px] w-[37px]" viewBox="0 0 40 40" preserveAspectRatio="none"><circle cx="20" cy="20" r="20" fill="#fdd23c"/><path d="M2.700 10A20 20 0 0 1 37.300 10L20 11z" fill="#e2483a"/><path d="M2.700 10A20 20 0 0 0 19 40l9-16-8-13z" fill="#2aa04a"/><path d="M2.700 10A20 20 0 0 1 37.300 10H20L11.500 25z" fill="#e2483a"/><path d="M37.300 10A20 20 0 0 1 19 40l10-15V11z" fill="#fdd23c"/><circle cx="20" cy="20" r="9.500" fill="#fff"/><circle cx="20" cy="20" r="7.300" fill="#3f82ee"/></svg></div>
    <svg class="mt-[22px] ml-auto h-[12px] w-[22px]" viewBox="0 0 22 12"><path d="M1 11L11 1.500 21 11" fill="none" stroke="#fff" stroke-width="1.700"/></svg>
    <svg class="mt-[17px] ml-[18px] h-[24px] w-[25px]" viewBox="0 0 25 24"><path d="M5 8a7 7 0 0 1 14 0l2 8-3 5H6l-4-4z" fill="#0c0c10"/><ellipse cx="12" cy="16" rx="6" ry="6" fill="#f2f2f2"/><path d="M3 10q9 4 17 0l-1 5q-8 1-11 0v5l-4-1z" fill="#dd2222"/><ellipse cx="9.700" cy="6" rx="1.700" ry="2" fill="#fff"/><ellipse cx="14.300" cy="6" rx="1.700" ry="2" fill="#fff"/><path d="M8 9h8l-4 2z" fill="#f5a81c"/><path d="M4 21h8v2H4z" fill="#f5a81c"/><ellipse cx="18" cy="16.500" rx="7" ry="6" fill="#fb8f3c"/><path d="M14.500 15h7M14.500 18h7" stroke="#fff" stroke-width="1.300"/></svg>
    <svg class="mt-[18px] ml-[12px] h-[22px] w-[28px]" viewBox="0 0 28 22" fill="none" stroke="#fff" stroke-width="1.500"><path d="M8 2h19v14H5V8M10 20.500h10M15 16v4"/><path d="M1 2h6v5H1zM4 7v4"/></svg>
    <svg class="mt-[18px] ml-[12px] h-[22px] w-[28px]" viewBox="0 0 28 22" fill="none" stroke="#fff" stroke-width="1.500"><path d="M1 8h4l6-5.500v17L5 14H1zM14 8q2 3 0 6M18 5q4 6 0 12M22 2q6.500 9 0 18"/></svg>
    <svg class="mt-[16px] ml-[18px] h-[26px] w-[28px]" viewBox="0 0 28 26" fill="none" stroke="#fff" stroke-width="1.600"><path d="M9 21L9.500 16 18 4q2-3 4.500-2T23 6l-9 13.500zM12 13Q2 12 1 19q0 5 5 5 4 0 7-5M16 17q0 4 3 3t3-7q1-2 5-1"/></svg>
    <span class="mt-[14px] ml-[17px] text-[26px] leading-[28px] text-white">中</span>
    <span class="mt-[17px] ml-[23px] flex h-[23px] w-[26px] items-center justify-center bg-white text-[20px] leading-[22px] text-black">拼</span>
    <div class="relative mt-[17px] mr-[30px] ml-[37px] h-[39px] w-[39px]">
      <svg class="h-[24px] w-[28px]" viewBox="0 0 28 24"><path d="M0 0h27v18h-8l-5 6v-6H0z" fill="#fff"/><path d="M5 5.500h17M5 10h17M5 14.500h12" stroke="#1c2b40" stroke-width="1.700"/></svg>
      <span class="absolute top-[11px] left-[12px] flex h-[24px] w-[27px] items-center justify-center rounded-[50%] border-2 border-[#8b8b8b] bg-[#33363a] text-[17px] leading-none font-bold text-white">1</span>
    </div>
  </footer>
  <div class="h-[3px] shrink-0 bg-[#11161c]"></div>

  <!-- Remote desktop connection bar -->
  <div class="absolute top-[29px] left-[483px] h-[39px] w-[955px] bg-[#7c8794] [clip-path:polygon(0_0,100%_0,912px_100%,44px_100%)]">
    <div class="flex h-[37px] w-full bg-[linear-gradient(#8fb5de,#5d89bd_50%,#285698_55%,#26539a)] text-white [clip-path:polygon(1px_0,954px_0,911px_100%,44px_100%)]">
      <span class="ml-[50px] flex h-[31px] w-[37px] items-center justify-center border border-[#4f8fd0]/70 bg-[#3f83cf]/40"><svg class="h-[16px] w-[22px]" viewBox="0 0 22 16" fill="none" stroke="#fff"><path d="M0 8h8" stroke-width="2"/><path d="M8.500 0v16M20.500 2v12" stroke-width="2.500"/><path d="M9 5h11M9 11h11" stroke-width="2.500"/></svg></span>
      <svg class="mt-[7px] ml-[9px] h-[19px] w-[21px]" viewBox="0 0 21 19" fill="#fff"><path d="M0 15h4v4H0zM5.500 10h4v9h-4zM11 5h4v14h-4zM16.500 0h4v19h-4z"/></svg>
      <svg class="mt-[21px] ml-[683px] h-[4px] w-[15px]" viewBox="0 0 15 4"><path d="M0 0h15v4H0z" fill="#fff"/></svg>
      <svg class="mt-[9px] ml-[23px] h-[17px] w-[18px]" viewBox="0 0 18 17" fill="none" stroke="#fff" stroke-width="1.500"><path d="M6 5V1h11v9h-4M1 7h11v9H1z"/><path d="M6 2h11M1 8h11" stroke-width="2.500"/></svg>
      <svg class="mt-[10px] ml-[21px] h-[14px] w-[17px]" viewBox="0 0 17 14" fill="none" stroke="#fff" stroke-width="3.500"><path d="M2 0l13 14M15 0L2 14"/></svg>
    </div>
  </div>
  <div class="absolute top-[29px] left-[882px] flex h-[30px] w-[156px] items-center overflow-hidden rounded-b-[6px] bg-[#2a3e58]/90">
    <span class="absolute top-[5px] left-[6px] text-[19px] leading-6 tracking-[0.600px] whitespace-nowrap text-[#7b8794]">192.168.15.207</span>
    <svg class="relative mt-[4px] ml-[11px] h-[15px] w-[20px]" viewBox="0 0 20 15" fill="#14c060"><path d="M0 8h4v7H0zM6 4h4v11H6zM12 2h3v13h-3zM17 0h2v15h-2z"/></svg>
    <i class="relative mt-[2px] ml-[10px] h-[12px] w-[13px] rounded-full bg-[#20d060]"></i>
    <span class="relative mt-[2px] ml-[11px] text-[19px] leading-6 tracking-[0.900px] whitespace-nowrap text-[#d5d9de]">腾讯会议</span>
  </div>
  <div class="absolute top-[28px] left-[794px] flex h-[5px] w-[331px] border-x border-b border-[#555] bg-white"><i class="ml-[145px] h-full w-px bg-[#777]"></i><i class="ml-[73px] h-full w-px bg-[#777]"></i></div>

  <!-- Recording controls -->
  <div class="absolute top-[337px] left-[1620px] flex h-[33px] w-[160px] items-center rounded-l-[4px] bg-black pl-[13px] text-white">
    <svg class="h-[8px] w-[9px]" viewBox="0 0 9 8" fill="#fff"><path d="M0 0h3v8H0zM6 0h3v8H6z"/></svg>
    <i class="ml-[26px] h-[8px] w-[8px] bg-white"></i>
    <span class="mb-[3px] ml-[23px] text-[16px] leading-5 tracking-[-0.150px]">00:21:27</span>
  </div>

  <!-- Current speaker -->
  <div class="absolute top-[488px] left-[1485px] flex h-[52px] w-[407px] items-center rounded-[6px] bg-[#383b40] pl-[22px]">
    <svg class="h-[23px] w-[17px]" viewBox="5 2 14 20" preserveAspectRatio="none"><path d="M12 14c1.660 0 3-1.340 3-3V5c0-1.660-1.340-3-3-3S9 3.340 9 5v6c0 1.660 1.340 3 3 3z" fill="#8e9094"/><path d="M6 10.500a6 6 0 0 0 12 0M12 17v4M8 21.200h8" fill="none" stroke="#75787c" stroke-width="1.300"/></svg>
    <i class="ml-[20px] h-[40px] w-px bg-[#222428]"></i>
    <span class="ml-[12px] w-[180px] text-[19px] leading-6 tracking-[0.800px] whitespace-nowrap text-white">正在讲话: 老周;</span>
    <svg class="h-[36px] w-[78px] blur-[1.500px]" viewBox="0 0 78 36" fill="#595c60"><path d="M1 22L22 3l10 9-18 21q-12-3-13-11z"/><path d="M28 22L50 3l11 10-20 21z"/><path d="M50 3l26 20-9 10-14-11z" fill="#4a4d51"/></svg>
  </div>

  <!-- Chat entry -->
  <div class="absolute top-[829px] left-[20px] flex h-[44px] w-[232px] items-center rounded-[4px] bg-[#030308] pl-[15px]">
    <svg class="h-[24px] w-[28px]" viewBox="0 0 28 24"><ellipse cx="14" cy="12" rx="13.500" ry="12" fill="#8f8f8f"/><circle cx="9" cy="8.500" r="2" fill="#111"/><circle cx="19" cy="8.500" r="2" fill="#111"/><path d="M5 13h18q-2 7-9 7t-9-7z" fill="#111"/></svg>
    <i class="ml-[9px] h-[29px] w-px bg-[#444]"></i>
    <span class="ml-[22px] w-[109px] text-[19px] leading-6 tracking-[0.500px] whitespace-nowrap text-[#c4c4c4]">说点什么...</span>
    <i class="h-[29px] w-px bg-[#444]"></i>
    <svg class="ml-[14px] h-[12px] w-[9px]" viewBox="0 0 9 12"><path d="M8 .5L1.500 6 8 11.500" fill="none" stroke="#777" stroke-width="1.700"/></svg>
  </div>

  <!-- Hand cursor -->
  <svg class="absolute top-[522px] left-[717px] h-[29px] w-[26px]" viewBox="0 0 26 29"><path d="M8 18V3q0-2 2-2t2 2v8q0-2 2-2t2 3q1-2 2.500-1.500T20 13q1-1.500 3-.5t2 3.500v5q0 7-8 7h-2q-4 0-6-4l-6-6q-3-4 1-4 2 0 4 4z" fill="#fff" stroke="#333" stroke-width="1.500"/><path d="M12 10v6M16 11v5M20 13v4" stroke="#333" stroke-width="1.200"/></svg>

  <!-- Screen share frame corners -->
  <div class="absolute top-[29px] left-0 h-[136px] w-[160px] border-t-[7px] border-l-[8px] border-[#05d77e] [clip-path:polygon(0_0,100%_0,100%_7px,8px_7px,8px_100%,0_100%)]"></div>
  <div class="absolute top-[29px] left-[1760px] h-[140px] w-[160px] border-t-[7px] border-r-[8px] border-[#05d77e]"></div>
  <div class="absolute top-[940px] left-0 h-[138px] w-[160px] border-b-[5px] border-l-[8px] border-[#05d77e]"></div>
  <div class="absolute top-[940px] left-[1760px] h-[138px] w-[160px] border-r-[8px] border-b-[5px] border-[#05d77e]"></div>
</div>
</body>
</html>
